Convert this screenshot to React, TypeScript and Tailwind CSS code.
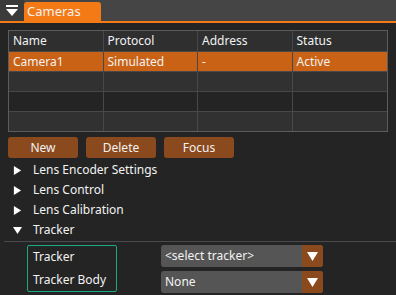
import React from "react";

const columns = ["Name", "Protocol", "Address", "Status"];
const rows = [
  ["Camera1", "Simulated", "-", "Active"],
  ["", "", "", ""],
  ["", "", "", ""],
  ["", "", "", ""],
];

function DownTri({ className }: { className?: string }) {
  return (
    <svg viewBox="0 0 10 10" className={className}>
      <path d="M0 1 L10 1 L5 9 Z" fill="white" />
    </svg>
  );
}

function RightTri() {
  return (
    <svg viewBox="0 0 10 10" className="h-[9px] w-[9px]">
      <path d="M1 0 L9 5 L1 10 Z" fill="white" />
    </svg>
  );
}

function TreeItem({ label, open }: { label: string; open?: boolean }) {
  return (
    <div className="flex h-5 items-center">
      <div className="flex w-[33px] justify-center pl-[1px]">
        {open ? <DownTri className="h-[9px] w-[9px]" /> : <RightTri />}
      </div>
      <span>{label}</span>
    </div>
  );
}

function Select({ value }: { value: string }) {
  return (
    <div className="flex h-[22px] w-[162px] overflow-hidden rounded-[3px] bg-[#555555]">
      <span className="flex-1 pl-1 leading-[22px]">{value}</span>
      <div className="flex w-[21px] items-center justify-center bg-[#8b4a1d]">
        <DownTri className="h-[11px] w-[11px]" />
      </div>
    </div>
  );
}

export default function App() {
  return (
    <div
      className="h-[295px] w-[396px] overflow-hidden bg-[#242424] text-[12px] text-[#f2f2f2]"
      style={{ fontFamily: '"Noto Sans", "Open Sans", sans-serif' }}
    >
      {/* tab strip */}
      <div className="flex h-[23px] border-b-2 border-[#f47a16] bg-[#454545]">
        <div className="flex w-[24px] items-center justify-center bg-[#3b3b3b]">
          <svg viewBox="0 0 12 12" className="h-[12px] w-[12px]">
            <rect x="0" y="0" width="12" height="2" fill="white" />
            <path d="M0 4 L12 4 L6 11 Z" fill="white" />
          </svg>
        </div>
        <div className="mt-[2px] flex w-[77px] items-center rounded-t-[3px] bg-[#f47a16] pl-[3px] text-[13px] leading-none">
          Cameras
        </div>
      </div>

      {/* table */}
      <div className="mx-2 mt-[7px] border border-[#5b5b62]">
        <div className="grid h-5 grid-cols-4 bg-[#2f2f30]">
          {columns.map((c, i) => (
            <div
              key={c}
              className={`flex items-center pl-1 ${i < 3 ? "border-r border-[#48484c]" : ""}`}
            >
              {c}
            </div>
          ))}
        </div>
        {rows.map((r, ri) => (
          <div
            key={ri}
            className={`grid h-5 grid-cols-4 border-t border-[#48484c] ${
              ri === 0 ? "bg-[#c96215]" : ri % 2 === 1 ? "bg-[#313131]" : "bg-[#242424]"
            }`}
          >
            {r.map((cell, ci) => (
              <div
                key={ci}
                className={`flex items-center pl-1 ${ci < 3 ? "border-r border-[#48484c]" : ""}`}
              >
                {cell}
              </div>
            ))}
          </div>
        ))}
      </div>

      {/* buttons */}
      <div className="ml-2 mt-[5px] flex gap-2">
        {["New", "Delete", "Focus"].map((b) => (
          <div
            key={b}
            className="flex h-[21px] w-[70px] items-center justify-center rounded-[3px] bg-[#8b4a1d]"
          >
            {b}
          </div>
        ))}
      </div>

      {/* tree */}
      <div className="mt-[2px]">
        <TreeItem label="Lens Encoder Settings" />
        <TreeItem label="Lens Control" />
        <TreeItem label="Lens Calibration" />
        <TreeItem label="Tracker" open />
      </div>

      <div className="ml-1 mt-[1px] h-px bg-[#4a4a4e]" />

      {/* tracker settings */}
      <div className="ml-[27px] mt-[3px] flex">
        <div className="flex h-[47px] w-[90px] flex-col justify-around rounded-[2px] border border-[#1ca882] pl-[5px]">
          <span>Tracker</span>
          <span>Tracker Body</span>
        </div>
        <div className="ml-[44px] flex flex-col gap-1">
          <Select value="<select tracker>" />
          <Select value="None" />
        </div>
      </div>
    </div>
  );
}
